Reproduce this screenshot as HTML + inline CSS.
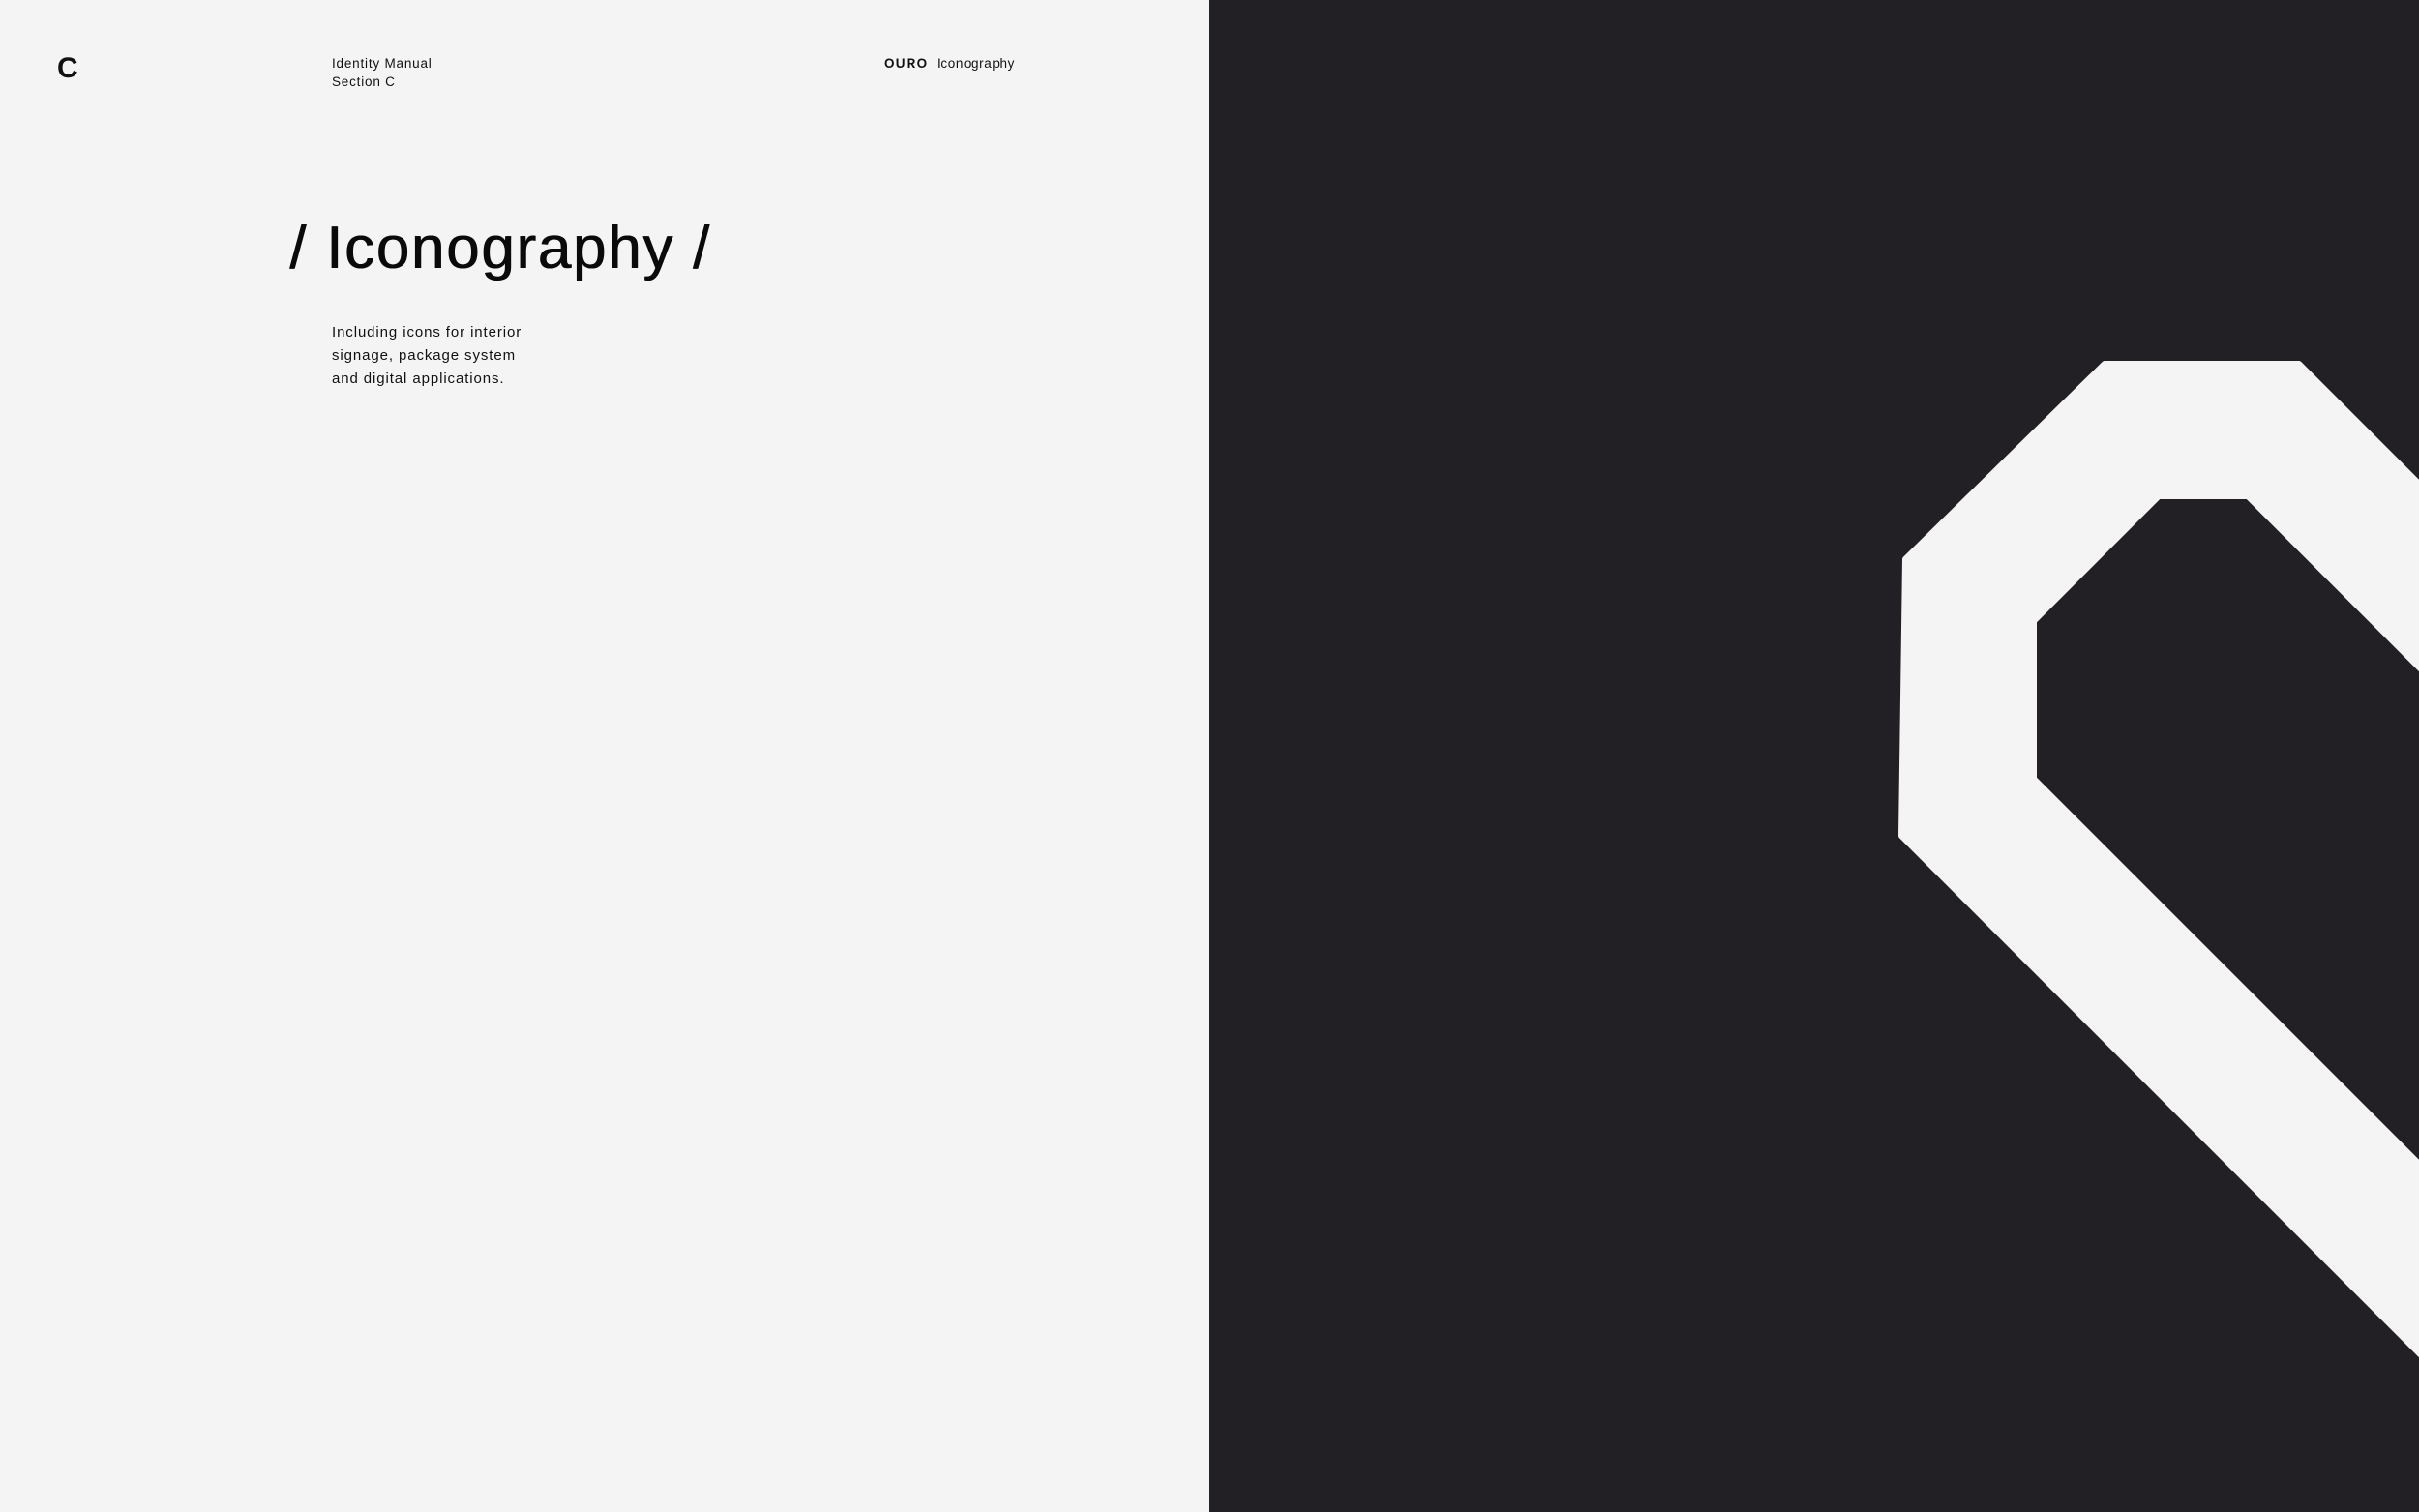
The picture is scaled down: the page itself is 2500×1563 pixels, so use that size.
<!DOCTYPE html>
<html><head><meta charset="utf-8"><style>
html,body{margin:0;padding:0;}
body{width:2500px;height:1563px;position:relative;overflow:hidden;background:#f4f4f4;font-family:"Liberation Sans",sans-serif;color:#111;}
.t{position:absolute;white-space:nowrap;}
.dark{position:absolute;left:1250px;top:0;width:1250px;height:1563px;background:#222024;}
</style></head><body>
<div class="t" style="left:59px;top:54px;font-size:30px;font-weight:bold;">C</div>
<div class="t" style="left:343px;top:56px;font-size:13.5px;line-height:19px;letter-spacing:0.8px;">Identity Manual<br>Section C</div>
<div class="t" style="left:914px;top:56px;font-size:13.5px;line-height:19px;letter-spacing:0.6px;"><b style="letter-spacing:1.2px">OURO</b>&nbsp; Iconography</div>
<div class="t" style="left:299px;top:220px;font-size:62px;line-height:74px;letter-spacing:1.7px;color:#0a0a0a;text-shadow:0.8px 0 0 #0a0a0a;">/ Iconography /</div>
<div class="t" style="left:343px;top:332px;font-size:15px;line-height:24px;letter-spacing:0.9px;">Including icons for interior<br>signage, package system<br>and digital applications.</div>
<div class="dark"></div>
<svg style="position:absolute;left:0;top:0" width="2500" height="1563">
<path fill="#f4f4f4" fill-rule="evenodd" stroke="#f4f4f4" stroke-width="6" stroke-linejoin="round"
d="M2175,376 L2376,376 L2503,503 L2503,1402 L1965,864 L1969,578 Z M2231,513 L2323,513 L2503,693 L2503,1206 L2102,805 L2102,642 Z"/>
</svg>
</body></html>
